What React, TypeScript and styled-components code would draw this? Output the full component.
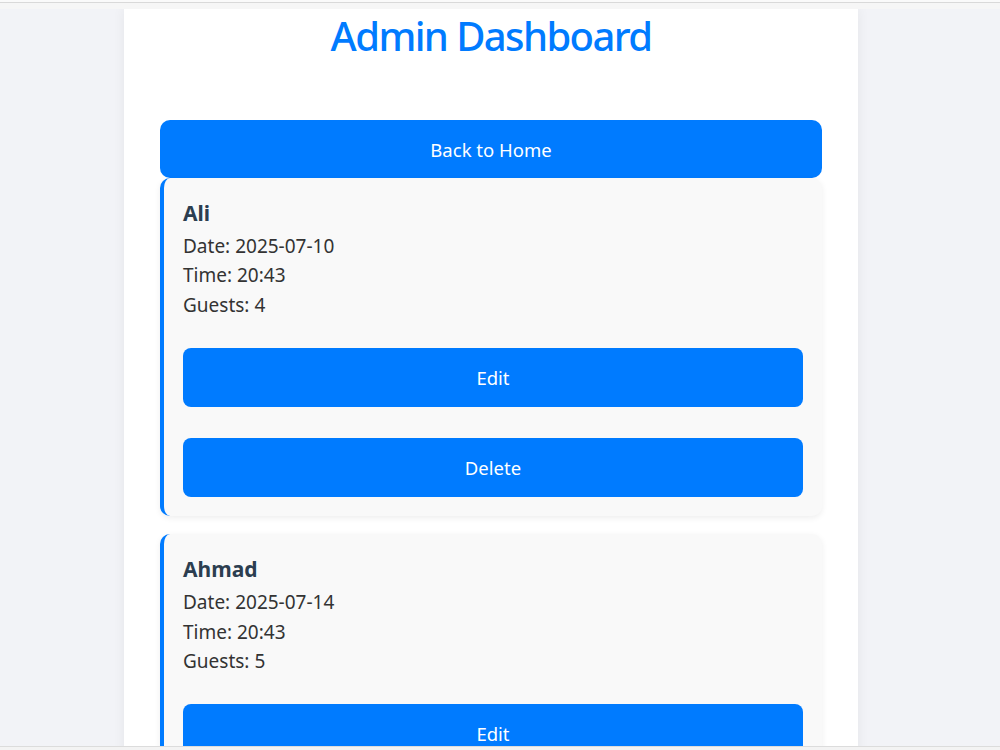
import React from 'react'
import styled, { createGlobalStyle } from 'styled-components'

const GlobalStyle = createGlobalStyle`
    html, body {
        margin: 0;
        padding: 0;
        background: #f2f3f7;
        font-family: 'Noto Sans', 'Open Sans', sans-serif;
        overflow: hidden;
    }
    body::before {
        content: '';
        position: fixed;
        top: 0;
        left: 0;
        right: 0;
        height: 7px;
        background: #f6f6f6;
        border-top: 2px solid #fafafa;
        box-shadow: inset 0 1px 0 #d9d9d9;
        z-index: 10;
    }
    body::after {
        content: '';
        position: fixed;
        bottom: 0;
        left: 0;
        right: 0;
        height: 3px;
        background: #f3f3f3;
        border-top: 1px solid #dcdcdc;
        z-index: 10;
    }
`

const Page = styled.div`
    width: 982px;
    padding-top: 8px;
`

const Container = styled.div`
    width: 734px;
    margin: 0 auto;
    min-height: 760px;
    background: #ffffff;
    box-shadow: 0 0 12px rgba(0, 0, 0, 0.06);
    padding: 0 36px;
    box-sizing: border-box;
`

const Title = styled.h1`
    margin: 0 0 62px;
    padding-top: 6px;
    text-align: center;
    color: #007bff;
    font-size: 40px;
    font-weight: 500;
    letter-spacing: -1.6px;
    line-height: 44px;
`

const Button = styled.button<{ $h?: number; $radius?: number }>`
    display: block;
    width: 100%;
    height: ${(p) => p.$h ?? 59}px;
    border: none;
    border-radius: ${(p) => p.$radius ?? 8}px;
    background: #007bff;
    color: #ffffff;
    font-family: inherit;
    font-size: 18.5px;
    cursor: pointer;
`

const Card = styled.div`
    background: #f9f9f9;
    border-left: 4px solid #007bff;
    border-radius: 10px;
    box-shadow: 0 2px 6px rgba(0, 0, 0, 0.07);
    padding: 20px 19px 19px 19px;
    margin-bottom: 18px;
`

const Name = styled.h3`
    margin: 0 0 4px;
    font-size: 21px;
    font-weight: 700;
    color: #2c3e50;
    line-height: 30px;
`

const Detail = styled.p`
    margin: 0;
    font-size: 19px;
    line-height: 29.4px;
    color: #333333;
`

const Actions = styled.div`
    display: flex;
    flex-direction: column;
    gap: 31px;
    margin-top: 28px;
`

const bookings = [
    { name: 'Ali', date: '2025-07-10', time: '20:43', guests: 4 },
    { name: 'Ahmad', date: '2025-07-14', time: '20:43', guests: 5 },
]

const App = () => {
    return (
        <Page>
            <GlobalStyle />
            <Container>
                <Title>Admin Dashboard</Title>
                <Button $h={58} $radius={10}>
                    Back to Home
                </Button>
                {bookings.map((b) => (
                    <Card key={b.name}>
                        <Name>{b.name}</Name>
                        <Detail>Date: {b.date}</Detail>
                        <Detail>Time: {b.time}</Detail>
                        <Detail>Guests: {b.guests}</Detail>
                        <Actions>
                            <Button>Edit</Button>
                            <Button>Delete</Button>
                        </Actions>
                    </Card>
                ))}
            </Container>
        </Page>
    )
}

export default App
